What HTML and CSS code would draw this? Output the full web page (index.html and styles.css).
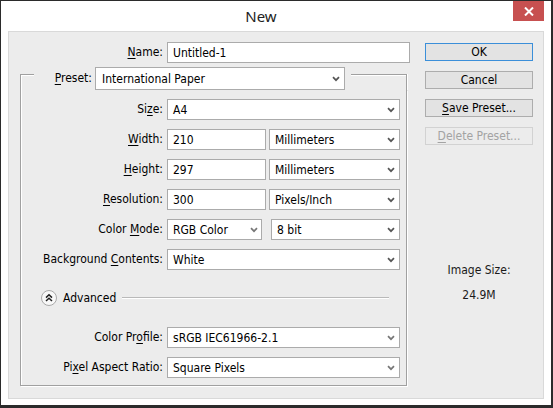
FILE: index.html
```html
<!DOCTYPE html>
<html>
<head>
<meta charset="utf-8">
<title>New</title>
<link rel="stylesheet" href="styles.css">
</head>
<body>
<div class="window">
  <div class="titlebar">
    <div class="title">New</div>
    <div class="close">
      <svg width="10" height="9" viewBox="0 0 10 9"><path d="M1 0.5 L9 8.5 M9 0.5 L1 8.5" stroke="#fff" stroke-width="2" fill="none"/></svg>
    </div>
  </div>
  <div class="panel">
    <div class="form">
      <div class="name-row">
        <label class="lbl"><u>N</u>ame:</label>
        <div class="field">Untitled-1</div>
      </div>
      <div class="group">
        <div class="group-head">
          <span class="gh-left"></span>
          <label class="lbl preset-lbl"><u>P</u>reset:</label>
          <div class="field select preset-select"><span>International Paper</span><svg class="chev" width="8" height="6" viewBox="0 0 8 6"><path d="M1 1.2 L4 4.2 L7 1.2" stroke="#555" stroke-width="1.7" fill="none"/></svg></div>
          <span class="gh-right"></span>
        </div>
        <div class="group-body">
          <div class="row">
            <label class="lbl">Si<u>z</u>e:</label>
            <div class="field select"><span>A4</span><svg class="chev" width="8" height="6" viewBox="0 0 8 6"><path d="M1 1.2 L4 4.2 L7 1.2" stroke="#555" stroke-width="1.7" fill="none"/></svg></div>
          </div>
          <div class="row">
            <label class="lbl"><u>W</u>idth:</label>
            <div class="pair">
              <div class="field num">210</div>
              <div class="field select"><span>Millimeters</span><svg class="chev" width="8" height="6" viewBox="0 0 8 6"><path d="M1 1.2 L4 4.2 L7 1.2" stroke="#555" stroke-width="1.7" fill="none"/></svg></div>
            </div>
          </div>
          <div class="row">
            <label class="lbl"><u>H</u>eight:</label>
            <div class="pair">
              <div class="field num">297</div>
              <div class="field select"><span>Millimeters</span><svg class="chev" width="8" height="6" viewBox="0 0 8 6"><path d="M1 1.2 L4 4.2 L7 1.2" stroke="#555" stroke-width="1.7" fill="none"/></svg></div>
            </div>
          </div>
          <div class="row">
            <label class="lbl"><u>R</u>esolution:</label>
            <div class="pair">
              <div class="field num">300</div>
              <div class="field select"><span>Pixels/Inch</span><svg class="chev" width="8" height="6" viewBox="0 0 8 6"><path d="M1 1.2 L4 4.2 L7 1.2" stroke="#555" stroke-width="1.7" fill="none"/></svg></div>
            </div>
          </div>
          <div class="row">
            <label class="lbl">Color <u>M</u>ode:</label>
            <div class="pair mode">
              <div class="field select mode-sel"><span>RGB Color</span><svg class="chev" width="8" height="6" viewBox="0 0 8 6"><path d="M1 1.2 L4 4.2 L7 1.2" stroke="#777" stroke-width="1.7" fill="none"/></svg></div>
              <div class="field select"><span>8 bit</span><svg class="chev" width="8" height="6" viewBox="0 0 8 6"><path d="M1 1.2 L4 4.2 L7 1.2" stroke="#555" stroke-width="1.7" fill="none"/></svg></div>
            </div>
          </div>
          <div class="row">
            <label class="lbl">Background <u>C</u>ontents:</label>
            <div class="field select"><span>White</span><svg class="chev" width="8" height="6" viewBox="0 0 8 6"><path d="M1 1.2 L4 4.2 L7 1.2" stroke="#555" stroke-width="1.7" fill="none"/></svg></div>
          </div>
          <div class="advanced">
            <svg class="adv-icon" width="16" height="16" viewBox="0 0 16 16">
              <circle cx="8" cy="8" r="7.5" fill="#f8f8f8" stroke="#a9a9a9"/>
              <path d="M5 7.6 L8 4.8 L11 7.6 M5 11 L8 8.2 L11 11" stroke="#222" stroke-width="1.5" fill="none"/>
            </svg>
            <span class="adv-text">Advanced</span>
            <span class="adv-line"></span>
          </div>
          <div class="row profile">
            <label class="lbl">Color Pr<u>o</u>file:</label>
            <div class="field select"><span>sRGB IEC61966-2.1</span><svg class="chev" width="8" height="6" viewBox="0 0 8 6"><path d="M1 1.2 L4 4.2 L7 1.2" stroke="#777" stroke-width="1.7" fill="none"/></svg></div>
          </div>
          <div class="row">
            <label class="lbl">Pi<u>x</u>el Aspect Ratio:</label>
            <div class="field select"><span>Square Pixels</span><svg class="chev" width="8" height="6" viewBox="0 0 8 6"><path d="M1 1.2 L4 4.2 L7 1.2" stroke="#777" stroke-width="1.7" fill="none"/></svg></div>
          </div>
        </div>
      </div>
    </div>
    <div class="side">
      <div class="btn default">OK</div>
      <div class="btn">Cancel</div>
      <div class="btn"><u>S</u>ave Preset...</div>
      <div class="btn disabled"><u>D</u>elete Preset...</div>
      <div class="image-size">Image Size:</div>
      <div class="size-val">24.9M</div>
    </div>
  </div>
</div>
</body>
</html>
```
FILE: styles.css
```css
* { box-sizing: border-box; }
html, body { margin: 0; padding: 0; }
body {
  width: 553px;
  height: 408px;
  overflow: hidden;
  background: #fff;
  font-family: "DejaVu Sans Condensed", "DejaVu Sans", sans-serif;
  font-size: 12px;
  color: #000;
}
u { text-decoration: underline; text-underline-offset: 2px; }

.window {
  width: 553px;
  height: 408px;
  border-style: solid;
  border-color: #2b2b2b;
  border-width: 1px 2px 3px 1px;
  background: #fff;
  display: flex;
  flex-direction: column;
}

.titlebar {
  height: 30px;
  display: flex;
  align-items: flex-start;
  padding-right: 7px;
  flex: none;
}
.title {
  flex: 1;
  text-align: center;
  padding-left: 8px;
  font-family: "Noto Sans", sans-serif;
  font-size: 15px;
  line-height: 30px;
  color: #222;
}
.close {
  width: 31px;
  height: 20px;
  background: #c75050;
  display: flex;
  align-items: center;
  justify-content: center;
}

.panel {
  margin: 0 7px;
  height: 368px;
  flex: none;
  border: 1px solid #d9d9d9;
  background: #ececec;
  display: flex;
  padding: 10px 10px 0 0;
  column-gap: 15px;
}

.form { width: 401px; flex: none; }

.lbl {
  text-align: right;
  white-space: nowrap;
  line-height: 21px;
}

.field {
  height: 21px;
  background: #fff;
  border: 1px solid #ababab;
  display: flex;
  align-items: center;
  padding: 0 4px 0 5px;
  white-space: nowrap;
}
.select { justify-content: space-between; }
.chev { flex: none; margin-top: 1px; }

.name-row {
  display: grid;
  grid-template-columns: 154px 243px;
  column-gap: 4px;
  align-items: center;
}

.group {
  margin: 4px 0 0 11px;
  width: 387px;
}
.group-head {
  display: flex;
  height: 23px;
}
.gh-left {
  width: 14px;
  margin-top: 7px;
  border-top: 1px solid #a0a0a0;
  border-left: 1px solid #a0a0a0;
  box-shadow: inset 1px 1px 0 #fff;
}
.preset-lbl {
  width: 58px;
  line-height: 23px;
}
.preset-select {
  width: 250px;
  height: 23px;
  margin-left: 3px;
  padding-left: 6px;
}
.gh-right {
  flex: 1;
  margin: 7px 0 0 6px;
  border-top: 1px solid #a0a0a0;
  border-right: 1px solid #a0a0a0;
  box-shadow: inset 0 1px 0 #fff, 1px 0 0 #fff;
}
.group-body {
  border: 1px solid #a0a0a0;
  border-top: none;
  box-shadow: inset 1px 0 0 #fff, 1px 1px 0 #fff;
  padding: 9px 6px 7px 0;
  display: flex;
  flex-direction: column;
  row-gap: 9px;
}

.row {
  display: grid;
  grid-template-columns: 142px 1fr;
  column-gap: 4px;
  align-items: center;
}
.pair {
  display: flex;
  column-gap: 3px;
}
.pair .num { width: 99px; flex: none; }
.pair .select { flex: 1; }
.pair.mode { column-gap: 9px; }
.pair .mode-sel { width: 95px; flex: none; padding-right: 3px; }

.advanced {
  display: flex;
  align-items: center;
  height: 16px;
  margin: 11px 11px 12px 20px;
}
.adv-icon { flex: none; }
.adv-text { margin-left: 6px; }
.adv-line {
  flex: 1;
  margin-left: 6px;
  border-top: 1px solid #b9b9b9;
  border-bottom: 1px solid #fff;
}

.side {
  width: 108px;
  flex: none;
  display: flex;
  flex-direction: column;
  padding-top: 1px;
}
.btn {
  height: 18px;
  margin-bottom: 10px;
  background: #e3e3e3;
  border: 1px solid #adadad;
  display: flex;
  align-items: center;
  justify-content: center;
  white-space: nowrap;
}
.btn.default { border-color: #3b8fd9; }
.btn.disabled {
  background: #ececec;
  border-color: #d2d2d2;
  color: #a3a3a3;
}
.image-size {
  margin-top: 108px;
  text-align: center;
  line-height: 14px;
  color: #1a1a1a;
}
.size-val {
  margin-top: 11px;
  text-align: center;
  line-height: 14px;
  color: #1a1a1a;
}
```
